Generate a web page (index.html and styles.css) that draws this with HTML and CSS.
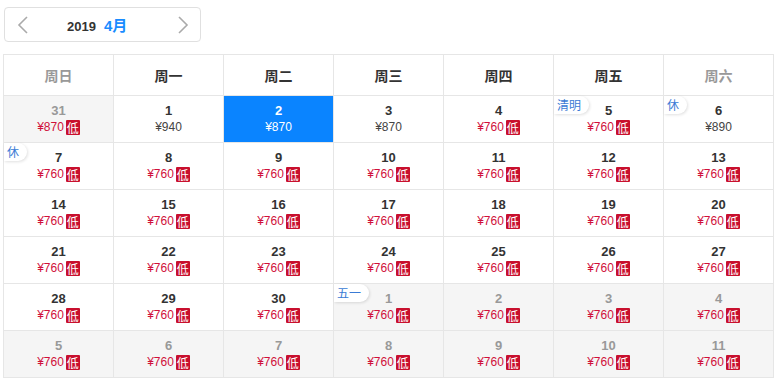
FILE: index.html
```html
<!DOCTYPE html>
<html>
<head>
<meta charset="utf-8">
<link rel="stylesheet" href="styles.css">
</head>
<body>
<div class="page">
  <div class="nav">
    <span class="arrow"><svg width="12" height="20" viewBox="0 0 12 20"><path d="M10 2 L2 10 L10 18" fill="none" stroke="#aaa" stroke-width="1.6"/></svg></span>
    <div class="title"><span class="year">2019</span><span class="month">4月</span></div>
    <span class="arrow"><svg width="12" height="20" viewBox="0 0 12 20"><path d="M2 2 L10 10 L2 18" fill="none" stroke="#aaa" stroke-width="1.6"/></svg></span>
  </div>
  <table class="cal">
    <thead>
      <tr>
        <th class="wk">周日</th><th>周一</th><th>周二</th><th>周三</th><th>周四</th><th>周五</th><th class="wk">周六</th>
      </tr>
    </thead>
    <tbody>
      <tr>
        <td class="other"><div class="d">31</div><div class="p low">¥870<i>低</i></div></td>
        <td><div class="d">1</div><div class="p">¥940</div></td>
        <td class="sel"><div class="d">2</div><div class="p">¥870</div></td>
        <td><div class="d">3</div><div class="p">¥870</div></td>
        <td><div class="d">4</div><div class="p low">¥760<i>低</i></div></td>
        <td><span class="tag">清明</span><div class="d">5</div><div class="p low">¥760<i>低</i></div></td>
        <td><span class="tag">休</span><div class="d">6</div><div class="p">¥890</div></td>
      </tr>
      <tr>
        <td><span class="tag">休</span><div class="d">7</div><div class="p low">¥760<i>低</i></div></td>
        <td><div class="d">8</div><div class="p low">¥760<i>低</i></div></td>
        <td><div class="d">9</div><div class="p low">¥760<i>低</i></div></td>
        <td><div class="d">10</div><div class="p low">¥760<i>低</i></div></td>
        <td><div class="d">11</div><div class="p low">¥760<i>低</i></div></td>
        <td><div class="d">12</div><div class="p low">¥760<i>低</i></div></td>
        <td><div class="d">13</div><div class="p low">¥760<i>低</i></div></td>
      </tr>
      <tr>
        <td><div class="d">14</div><div class="p low">¥760<i>低</i></div></td>
        <td><div class="d">15</div><div class="p low">¥760<i>低</i></div></td>
        <td><div class="d">16</div><div class="p low">¥760<i>低</i></div></td>
        <td><div class="d">17</div><div class="p low">¥760<i>低</i></div></td>
        <td><div class="d">18</div><div class="p low">¥760<i>低</i></div></td>
        <td><div class="d">19</div><div class="p low">¥760<i>低</i></div></td>
        <td><div class="d">20</div><div class="p low">¥760<i>低</i></div></td>
      </tr>
      <tr>
        <td><div class="d">21</div><div class="p low">¥760<i>低</i></div></td>
        <td><div class="d">22</div><div class="p low">¥760<i>低</i></div></td>
        <td><div class="d">23</div><div class="p low">¥760<i>低</i></div></td>
        <td><div class="d">24</div><div class="p low">¥760<i>低</i></div></td>
        <td><div class="d">25</div><div class="p low">¥760<i>低</i></div></td>
        <td><div class="d">26</div><div class="p low">¥760<i>低</i></div></td>
        <td><div class="d">27</div><div class="p low">¥760<i>低</i></div></td>
      </tr>
      <tr>
        <td><div class="d">28</div><div class="p low">¥760<i>低</i></div></td>
        <td><div class="d">29</div><div class="p low">¥760<i>低</i></div></td>
        <td><div class="d">30</div><div class="p low">¥760<i>低</i></div></td>
        <td class="other"><span class="tag">五一</span><div class="d">1</div><div class="p low">¥760<i>低</i></div></td>
        <td class="other"><div class="d">2</div><div class="p low">¥760<i>低</i></div></td>
        <td class="other"><div class="d">3</div><div class="p low">¥760<i>低</i></div></td>
        <td class="other"><div class="d">4</div><div class="p low">¥760<i>低</i></div></td>
      </tr>
      <tr>
        <td class="other"><div class="d">5</div><div class="p low">¥760<i>低</i></div></td>
        <td class="other"><div class="d">6</div><div class="p low">¥760<i>低</i></div></td>
        <td class="other"><div class="d">7</div><div class="p low">¥760<i>低</i></div></td>
        <td class="other"><div class="d">8</div><div class="p low">¥760<i>低</i></div></td>
        <td class="other"><div class="d">9</div><div class="p low">¥760<i>低</i></div></td>
        <td class="other"><div class="d">10</div><div class="p low">¥760<i>低</i></div></td>
        <td class="other"><div class="d">11</div><div class="p low">¥760<i>低</i></div></td>
      </tr>
    </tbody>
  </table>
</div>
</body>
</html>
```

FILE: styles.css
```css
html, body {
  margin: 0;
  padding: 0;
  background: #fff;
}
body {
  font-family: "Liberation Sans", Arial, "Noto Sans CJK SC", sans-serif;
  color: #333;
}
.page {
  padding: 7px 0 0 3px;
}
.nav {
  margin-left: 1px;
  height: 33px;
  border: 1px solid #e0e0e0;
  border-radius: 4px;
  display: flex;
  align-items: center;
  padding: 0 11px 0 12px;
  box-sizing: content-box;
  width: 172px;
}
.arrow {
  display: flex;
  align-items: center;
}
.title {
  flex: 1;
  display: flex;
  align-items: baseline;
  gap: 8px;
  padding-left: 38px;
}
.year {
  font-size: 13px;
  font-weight: bold;
  color: #333;
}
.month {
  font-size: 15px;
  font-weight: bold;
  color: #1a8cff;
  font-family: "Liberation Sans", "Noto Sans CJK SC", sans-serif;
}
.cal {
  margin-top: 12px;
  border-collapse: collapse;
  table-layout: fixed;
  width: 771px;
}
.cal th, .cal td {
  border: 1px solid #e6e6e6;
  text-align: center;
  padding: 0;
}
.cal th {
  height: 39px;
  padding-bottom: 1px;
  font-size: 14px;
  font-weight: bold;
  color: #333;
  font-family: "Noto Sans CJK SC", sans-serif;
}
.cal th.wk {
  color: #999;
}
.cal td {
  height: 47px;
  position: relative;
  vertical-align: top;
  padding-top: 6px;
  box-sizing: border-box;
}
.d {
  font-size: 13px;
  font-weight: bold;
  line-height: 17px;
  color: #333;
}
.p {
  font-size: 12px;
  line-height: 16px;
  color: #444;
  display: flex;
  justify-content: center;
  align-items: center;
}
.p.low {
  color: #d0103a;
}
.p i {
  font-style: normal;
  display: inline-block;
  width: 14px;
  height: 15px;
  line-height: 15px;
  margin-left: 2px;
  background: #c8102e;
  color: #fff;
  font-size: 12px;
  border-radius: 1px;
  font-family: "Noto Sans CJK SC", sans-serif;
}
.other {
  background: #f5f5f5;
}
.other .d {
  color: #999;
}
.sel {
  background: #0a84ff;
}
.sel .d, .sel .p {
  color: #fff;
}
.tag {
  position: absolute;
  left: 0;
  top: 0;
  font-size: 12px;
  line-height: 18px;
  color: #3a7bd5;
  background: #fff;
  padding: 0 8px 0 3px;
  border-radius: 0 9px 9px 0;
  box-shadow: 1px 1px 3px rgba(0, 0, 0, 0.12);
  font-family: "Noto Sans CJK SC", sans-serif;
}
```
